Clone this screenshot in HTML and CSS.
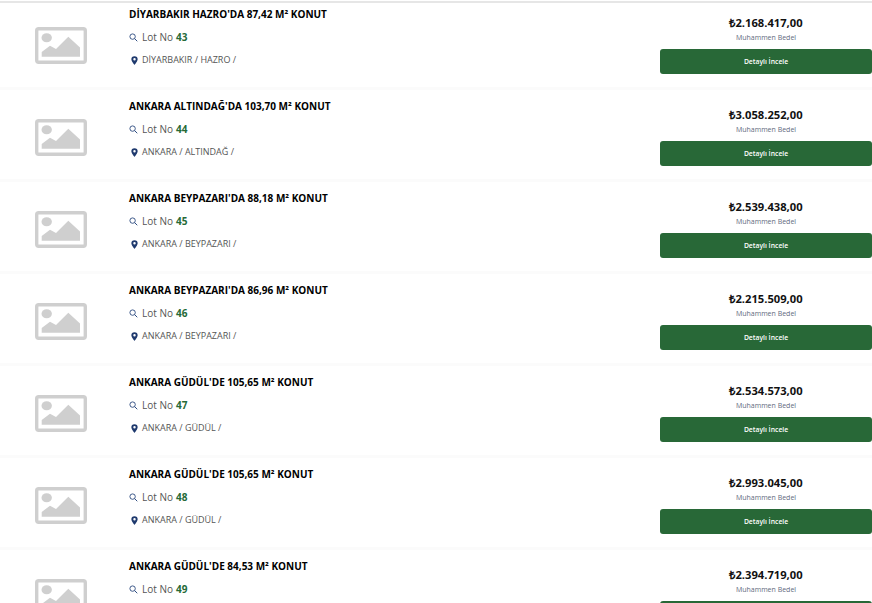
FILE: index.html
```html
<!DOCTYPE html>
<html lang="en">
<head>
    <title>Lot Listesi</title>
    <link rel="stylesheet" href="styles.css">
</head>
<body>
    <svg class="defs" width="0" height="0">
        <symbol id="placeholder" viewBox="0 0 52 37">
            <rect x="1.7" y="1.7" width="48.6" height="33.6" rx="2" fill="none" stroke="#cfcfcf" stroke-width="3.4"/>
            <ellipse cx="11.7" cy="10.7" rx="5.2" ry="4.5" fill="#cfcfcf"/>
            <path d="M6.7 29.7V25l8.3-6.3 6 3.3 12.3-12.3L45 20.500v9.200z" fill="#cfcfcf"/>
        </symbol>
        <symbol id="search" viewBox="0 0 10 10">
            <circle cx="4" cy="4" r="3" fill="none" stroke="#2b4a7f" stroke-width="1"/>
            <path d="M6.200 6.200 9.200 9.200" stroke="#2b4a7f" stroke-width="1.100"/>
        </symbol>
        <symbol id="pin" viewBox="0 0 8 10">
            <path d="M4 0a3.600 3.600 0 0 0-3.600 3.600C.4 6 4 10 4 10s3.600-4 3.600-6.400A3.600 3.600 0 0 0 4 0zm0 5a1.400 1.400 0 1 1 0-2.800A1.400 1.400 0 0 1 4 5z" fill="#1f3a6e"/>
        </symbol>
    </svg>

    <div class="list">
        <!-- Lot 43 -->
        <div class="lot">
            <div class="thumb"><svg class="thumb-img"><use href="#placeholder"/></svg></div>
            <div class="info">
                <h3>DİYARBAKIR HAZRO'DA 87,42 M² KONUT</h3>
                <div class="lot-no"><svg class="ico-search"><use href="#search"/></svg>Lot No <b>43</b></div>
                <div class="place"><svg class="ico-pin"><use href="#pin"/></svg>DİYARBAKIR / HAZRO /</div>
            </div>
            <div class="side">
                <div class="price">₺2.168.417,00</div>
                <div class="price-label">Muhammen Bedel</div>
                <a class="btn">Detaylı İncele</a>
            </div>
        </div>
        <!-- Lot 44 -->
        <div class="lot">
            <div class="thumb"><svg class="thumb-img"><use href="#placeholder"/></svg></div>
            <div class="info">
                <h3>ANKARA ALTINDAĞ'DA 103,70 M² KONUT</h3>
                <div class="lot-no"><svg class="ico-search"><use href="#search"/></svg>Lot No <b>44</b></div>
                <div class="place"><svg class="ico-pin"><use href="#pin"/></svg>ANKARA / ALTINDAĞ /</div>
            </div>
            <div class="side">
                <div class="price">₺3.058.252,00</div>
                <div class="price-label">Muhammen Bedel</div>
                <a class="btn">Detaylı İncele</a>
            </div>
        </div>
        <!-- Lot 45 -->
        <div class="lot">
            <div class="thumb"><svg class="thumb-img"><use href="#placeholder"/></svg></div>
            <div class="info">
                <h3>ANKARA BEYPAZARI'DA 88,18 M² KONUT</h3>
                <div class="lot-no"><svg class="ico-search"><use href="#search"/></svg>Lot No <b>45</b></div>
                <div class="place"><svg class="ico-pin"><use href="#pin"/></svg>ANKARA / BEYPAZARI /</div>
            </div>
            <div class="side">
                <div class="price">₺2.539.438,00</div>
                <div class="price-label">Muhammen Bedel</div>
                <a class="btn">Detaylı İncele</a>
            </div>
        </div>
        <!-- Lot 46 -->
        <div class="lot">
            <div class="thumb"><svg class="thumb-img"><use href="#placeholder"/></svg></div>
            <div class="info">
                <h3>ANKARA BEYPAZARI'DA 86,96 M² KONUT</h3>
                <div class="lot-no"><svg class="ico-search"><use href="#search"/></svg>Lot No <b>46</b></div>
                <div class="place"><svg class="ico-pin"><use href="#pin"/></svg>ANKARA / BEYPAZARI /</div>
            </div>
            <div class="side">
                <div class="price">₺2.215.509,00</div>
                <div class="price-label">Muhammen Bedel</div>
                <a class="btn">Detaylı İncele</a>
            </div>
        </div>
        <!-- Lot 47 -->
        <div class="lot">
            <div class="thumb"><svg class="thumb-img"><use href="#placeholder"/></svg></div>
            <div class="info">
                <h3>ANKARA GÜDÜL'DE 105,65 M² KONUT</h3>
                <div class="lot-no"><svg class="ico-search"><use href="#search"/></svg>Lot No <b>47</b></div>
                <div class="place"><svg class="ico-pin"><use href="#pin"/></svg>ANKARA / GÜDÜL /</div>
            </div>
            <div class="side">
                <div class="price">₺2.534.573,00</div>
                <div class="price-label">Muhammen Bedel</div>
                <a class="btn">Detaylı İncele</a>
            </div>
        </div>
        <!-- Lot 48 -->
        <div class="lot">
            <div class="thumb"><svg class="thumb-img"><use href="#placeholder"/></svg></div>
            <div class="info">
                <h3>ANKARA GÜDÜL'DE 105,65 M² KONUT</h3>
                <div class="lot-no"><svg class="ico-search"><use href="#search"/></svg>Lot No <b>48</b></div>
                <div class="place"><svg class="ico-pin"><use href="#pin"/></svg>ANKARA / GÜDÜL /</div>
            </div>
            <div class="side">
                <div class="price">₺2.993.045,00</div>
                <div class="price-label">Muhammen Bedel</div>
                <a class="btn">Detaylı İncele</a>
            </div>
        </div>
        <!-- Lot 49 -->
        <div class="lot">
            <div class="thumb"><svg class="thumb-img"><use href="#placeholder"/></svg></div>
            <div class="info">
                <h3>ANKARA GÜDÜL'DE 84,53 M² KONUT</h3>
                <div class="lot-no"><svg class="ico-search"><use href="#search"/></svg>Lot No <b>49</b></div>
                <div class="place"><svg class="ico-pin"><use href="#pin"/></svg>ANKARA / GÜDÜL /</div>
            </div>
            <div class="side">
                <div class="price">₺2.394.719,00</div>
                <div class="price-label">Muhammen Bedel</div>
                <a class="btn">Detaylı İncele</a>
            </div>
        </div>
    </div>
</body>
</html>
```

FILE: styles.css
```css
html, body {
    height: 100%;
    overflow: hidden;
}

body {
    margin: 0;
    background-color: #fff;
    font-family: "Open Sans", sans-serif;
}

.defs {
    display: block;
}

.list {
    border-top: 2px solid #e6e6e6;
    margin-top: 1px;
}

.lot {
    display: flex;
    height: 84px;
    border-bottom: 3px solid #fbfbfb;
    margin-bottom: 5px;
}

.thumb {
    width: 129px;
    flex-shrink: 0;
    padding: 24px 0 0 35px;
    box-sizing: border-box;
}

.thumb-img {
    display: block;
    width: 52px;
    height: 37px;
}

.info {
    flex: 1;
    padding-top: 3px;
}

h3 {
    margin: 0 0 7px;
    font-size: 10px;
    line-height: 16px;
    font-weight: 700;
    color: #000;
}

.lot-no {
    display: flex;
    align-items: center;
    font-size: 10px;
    line-height: 16px;
    color: #555;
    margin-bottom: 7px;
}

.lot-no b {
    margin-left: 3px;
    font-weight: 700;
    color: #266a37;
}

.ico-search {
    width: 9px;
    height: 9px;
    margin-right: 4px;
}

.place {
    display: flex;
    align-items: center;
    font-size: 9px;
    line-height: 16px;
    color: #555;
}

.ico-pin {
    width: 7px;
    height: 9px;
    margin: 1px 4px 0 2px;
}

.side {
    width: 212px;
    flex-shrink: 0;
    padding-top: 11px;
    text-align: center;
}

.price {
    font-family: "Open Sans", "Liberation Sans", sans-serif;
    font-size: 11.2px;
    line-height: 18px;
    font-weight: 700;
    color: #111;
}

.price-label {
    font-size: 7px;
    line-height: 11px;
    color: #5f6b80;
}

.btn {
    display: block;
    height: 25px;
    margin-top: 6px;
    line-height: 25px;
    font-size: 6.8px;
    font-weight: 600;
    color: #fff;
    background-color: #286837;
    border-radius: 3px;
}
```
